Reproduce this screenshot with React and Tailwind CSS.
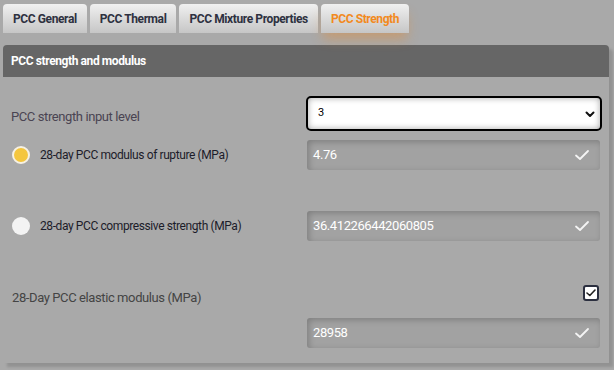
import React from "react";

const font = { fontFamily: "Roboto, 'Liberation Sans', sans-serif" };

function Check() {
  return (
    <svg width="16" height="12" viewBox="0 0 16 12">
      <path d="M2 6.5 L6 10 L14 2" fill="none" stroke="#f4f4f4" strokeWidth="1.8" strokeLinecap="round" strokeLinejoin="round" />
    </svg>
  );
}

function Field({ value }) {
  return (
    <div className="w-[293px] h-[30px] rounded-[3px] bg-[#a2a2a2] shadow-[inset_2px_2px_6px_rgba(0,0,0,0.22)] flex items-center justify-between pl-[6px] pr-[10px]">
      <span className="text-[13px] text-white">{value}</span>
      <Check />
    </div>
  );
}

function Tab({ label, active }) {
  return (
    <div
      className={
        "h-[29px] px-[10px] flex items-center rounded-t-[4px] bg-gradient-to-b from-[#f0f0f0] to-[#c6c6c6] text-[12px] font-bold " +
        (active ? "text-[#f28a1e] shadow-[0_8px_12px_-2px_rgba(230,140,50,0.45)]" : "text-[#2e3140]")
      }
    >
      {label}
    </div>
  );
}

export default function App() {
  return (
    <div className="w-[614px] h-[370px] bg-[#a9a9a9] overflow-hidden tracking-[-0.4px]" style={font}>
      <div className="flex gap-[3px] pl-[3px] pt-[4px]">
        <Tab label="PCC General" />
        <Tab label="PCC Thermal" />
        <Tab label="PCC Mixture Properties" />
        <Tab label="PCC Strength" active />
      </div>
      <div className="ml-[3px] mt-[12px] w-[606px] h-[318px] bg-[#a9a9a9] rounded-t-[4px] shadow-[4px_4px_3px_rgba(0,0,0,0.14)]">
        <div className="h-[32px] bg-[#666666] rounded-t-[4px] flex items-center pl-[8px] text-white text-[12px] font-bold">
          PCC strength and modulus
        </div>
        <div className="pl-[8px]">
          {/* row 1 */}
          <div className="flex items-center justify-between mt-[19px] pr-[7px]">
            <span className="text-[13px] text-[#4a4452] pt-[7px]">PCC strength input level</span>
            <div className="w-[296px] h-[35px] bg-white border-2 border-black rounded-[5px] shadow-[inset_0_0_6px_rgba(0,0,0,0.35)] flex items-center justify-between pl-[10px] pr-[4px]">
              <span className="text-[11px] text-black">3</span>
              <svg width="12" height="12" viewBox="0 0 12 12">
                <path d="M2.5 4.5 L6 8 L9.5 4.5" fill="none" stroke="#111" strokeWidth="2" strokeLinecap="round" strokeLinejoin="round" />
              </svg>
            </div>
          </div>
          {/* row 2 */}
          <div className="flex items-center justify-between mt-[9px] pr-[9px]">
            <div className="flex items-center gap-[10px] pl-[1px]">
              <span className="w-[18px] h-[18px] rounded-full bg-[#f4c63e] border-2 border-[#f6f1e4]" />
              <span className="text-[12px] text-[#1c1c2a]">28-day PCC modulus of rupture (MPa)</span>
            </div>
            <Field value="4.76" />
          </div>
          {/* row 3 */}
          <div className="flex items-center justify-between mt-[41px] pr-[9px]">
            <div className="flex items-center gap-[10px] pl-[1px]">
              <span className="w-[18px] h-[18px] rounded-full bg-[#f3f3f3]" />
              <span className="text-[12px] text-[#1c1c2a]">28-day PCC compressive strength (MPa)</span>
            </div>
            <Field value="36.412266442060805" />
          </div>
          {/* row 4 */}
          <div className="flex items-start justify-between mt-[44px] pr-[10px]">
            <span className="text-[13px] leading-[15px] text-[#444444] pl-[1px] mt-[5px]">28-Day PCC elastic modulus (MPa)</span>
            <span className="w-[16px] h-[16px] rounded-[3px] border-2 border-[#2b2f3f] bg-white flex items-center justify-center">
              <svg width="10" height="8" viewBox="0 0 10 8">
                <path d="M1 4 L3.8 6.5 L9 1" fill="none" stroke="#222" strokeWidth="1.6" strokeLinecap="round" strokeLinejoin="round" />
              </svg>
            </span>
          </div>
          <div className="flex justify-end mt-[13px] pr-[9px]">
            <Field value="28958" />
          </div>
        </div>
      </div>
    </div>
  );
}
